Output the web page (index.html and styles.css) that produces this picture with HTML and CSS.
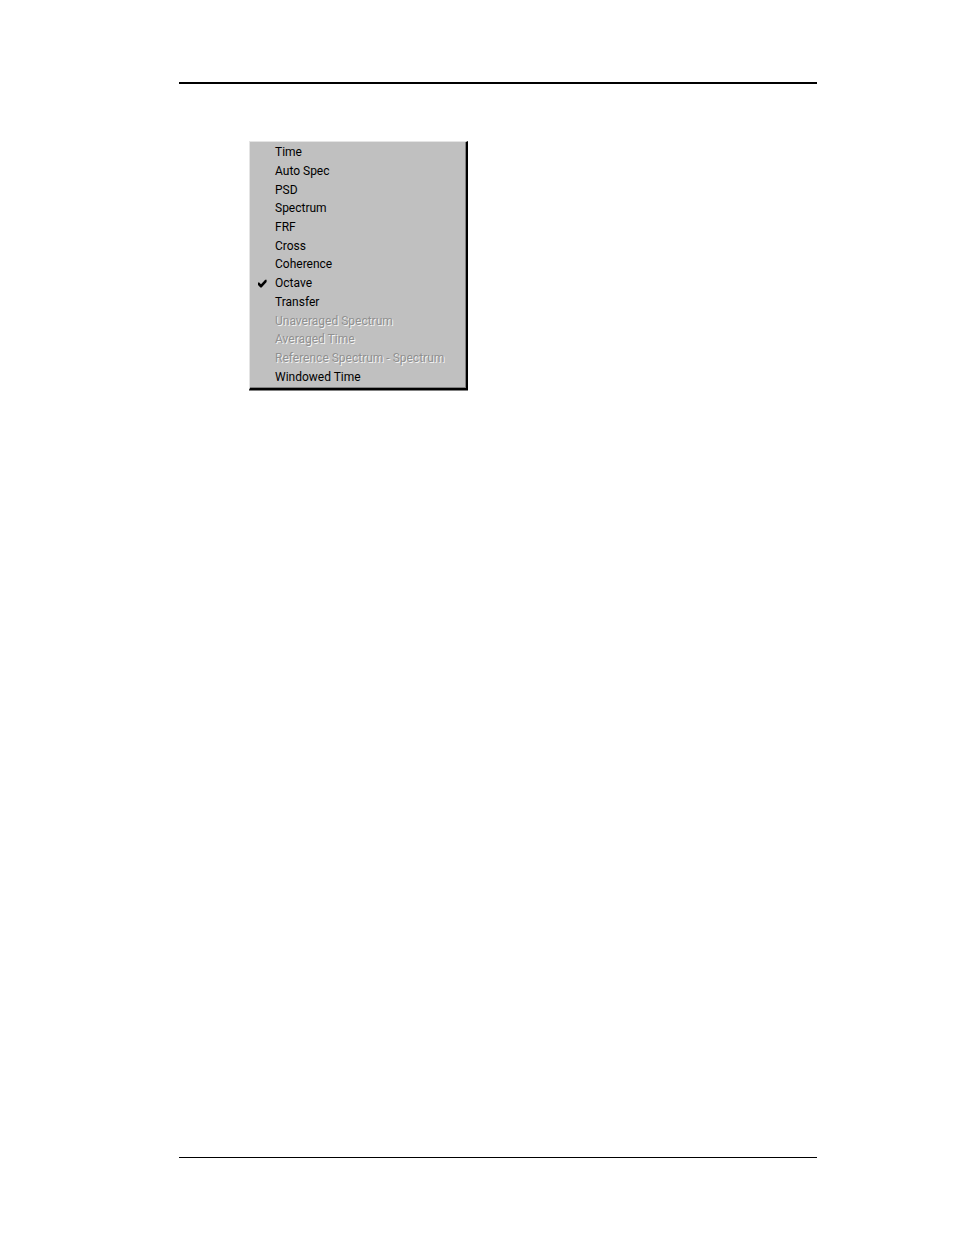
FILE: index.html
```
<!DOCTYPE html>
<html lang="en">
<head>
  <meta charset="UTF-8" />
  <title>Display menu</title>
  <link rel="stylesheet" href="styles.css">
</head>
<body>

<main class="page">
  <div class="menu" role="menu" aria-label="Measurement">
    <button class="item" role="menuitemradio" aria-checked="false">Time</button>
    <button class="item" role="menuitemradio" aria-checked="false">Auto Spec</button>
    <button class="item" role="menuitemradio" aria-checked="false">PSD</button>
    <button class="item" role="menuitemradio" aria-checked="false">Spectrum</button>
    <button class="item" role="menuitemradio" aria-checked="false">FRF</button>
    <button class="item" role="menuitemradio" aria-checked="false">Cross</button>
    <button class="item" role="menuitemradio" aria-checked="false">Coherence</button>
    <button class="item checked" role="menuitemradio" aria-checked="true">
      <svg class="check" viewBox="0 0 9 9" aria-hidden="true">
        <path d="M0 3.5 L1.2 3.5 L3 5.2 L7.2 0.8 L8.6 0.8 L8.6 3 L3.6 8.6 L2.4 8.6 L0 6 Z" />
      </svg>
      Octave
    </button>
    <button class="item" role="menuitemradio" aria-checked="false">Transfer</button>
    <button class="item" role="menuitemradio" aria-checked="false" disabled>Unaveraged Spectrum</button>
    <button class="item" role="menuitemradio" aria-checked="false" disabled>Averaged Time</button>
    <button class="item" role="menuitemradio" aria-checked="false" disabled>Reference Spectrum - Spectrum</button>
    <button class="item" role="menuitemradio" aria-checked="false">Windowed Time</button>
  </div>
</main>

</body>
</html>
```
FILE: styles.css
```
* { box-sizing: border-box; }

body {
  margin: 0;
  min-height: 100vh;
  display: flex;
  background: #fff;
  font-family: Roboto, "Liberation Sans", sans-serif;
}

/* printed page with a heavy rule on top and a thin one below */
.page {
  flex: 1;
  margin: 82px 137px 77px 179px;
  padding: 57px 70px;
  border-top: 2px solid #000;
  border-bottom: 1px solid #000;
}

.menu {
  display: grid;
  grid-auto-rows: 1fr;
  width: 219px;
  min-height: 249px;
  padding: 1px 0 2px;
  background: #c0c0c0;
  border: 1px solid #e4e4e4;
  border-right: 2px solid #000;
  border-bottom: 2px solid #000;
  box-shadow: inset -1px -1px #808080, 0 1px #808080;
}

.item {
  display: flex;
  align-items: center;
  min-height: 0;
  padding: 0 20px 0 25px;
  border: 0;
  background: none;
  color: #000;
  font-family: inherit;
  font-size: 12px;
  line-height: 18px;
  text-align: left;
  white-space: nowrap;
}

.item.checked {
  gap: 8px;
  padding-left: 8px;
}

.item:disabled {
  color: #909090;
  text-shadow: 1px 1px #f4f4f4;
}

.check {
  width: 9px;
  height: 9px;
}
```
